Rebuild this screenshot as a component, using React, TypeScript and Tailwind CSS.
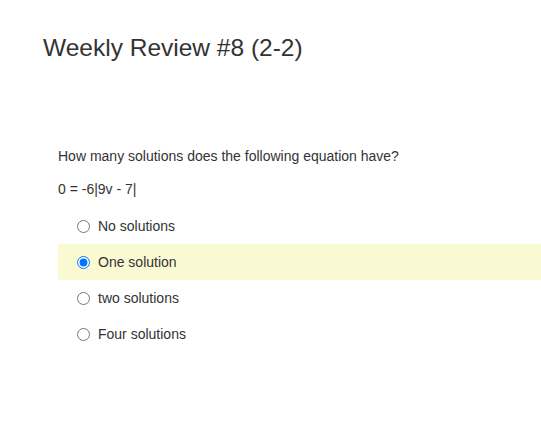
import React from 'react'

const options = ['No solutions', 'One solution', 'two solutions', 'Four solutions']

export default function App() {
  const [picked, setPicked] = React.useState(1)

  return (
    <main className="min-h-screen bg-white text-[#333] font-['Liberation_Sans',Arial,sans-serif]">
      {/* Title */}
      <div className="pl-[43px] pt-[34px]">
        <h1 className="text-[24.5px] leading-[28px] font-normal">Weekly Review #8 (2-2)</h1>
      </div>

      {/* Question */}
      <section className="mt-[84px] pl-[58px]">
        <p className="text-[14px] leading-[20px]">How many solutions does the following equation have?</p>
        <p className="mt-[13px] text-[14px] leading-[20px]">0 = -6|9v - 7|</p>

        <div className="mt-[9px] flex flex-col">
          {options.map((opt, i) => (
            <label
              key={opt}
              className={
                'flex h-[36px] items-center gap-[8px] pl-[19px] text-[14px] ' +
                (picked === i ? 'bg-[#fafad2]' : '')
              }
            >
              <input
                type="radio"
                name="q1"
                checked={picked === i}
                onChange={() => setPicked(i)}
                className="m-0 h-[13px] w-[13px]"
              />
              <span>{opt}</span>
            </label>
          ))}
        </div>
      </section>
    </main>
  )
}
